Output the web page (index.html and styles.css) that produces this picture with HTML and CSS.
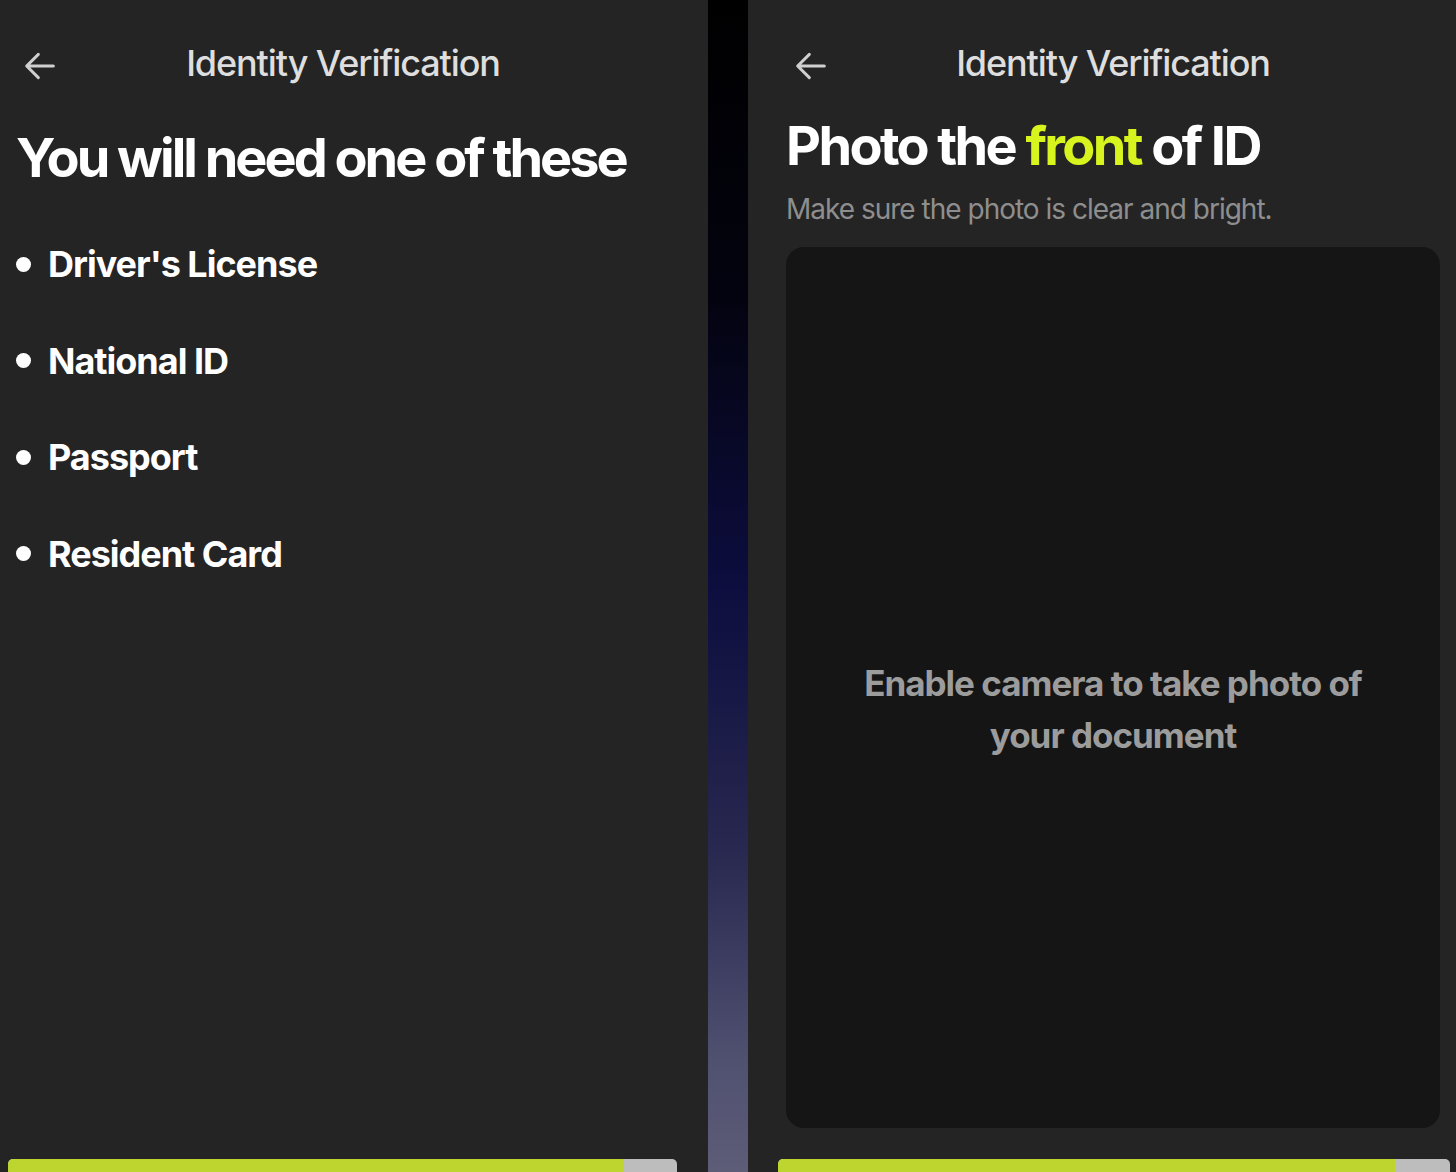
FILE: index.html
```html
<!DOCTYPE html>
<html lang="en">
<head>
<meta charset="UTF-8" />
<meta name="viewport" content="width=device-width, initial-scale=1" />
<title>Identity Verification</title>
<link rel="stylesheet" href="styles.css">
</head>
<body>

<div class="screen screen-left">
  <div class="topbar">
    <svg class="back" width="40" height="40" viewBox="0 0 24 24"><path d="M20 12H4.5M11 5l-7 7 7 7" fill="none" stroke="#cfcfcf" stroke-width="1.8" stroke-linecap="round" stroke-linejoin="round"/></svg>
    <div class="topbar-title">Identity Verification</div>
  </div>
  <h1 class="heading heading-needs">You will need one of these</h1>
  <ul class="doc-list">
    <li>Driver's License</li>
    <li>National ID</li>
    <li>Passport</li>
    <li>Resident Card</li>
  </ul>
  <div class="progress"><div class="progress-fill fill-left"></div></div>
</div>

<div class="divider"></div>

<div class="screen screen-right">
  <div class="topbar">
    <svg class="back" width="40" height="40" viewBox="0 0 24 24"><path d="M20 12H4.5M11 5l-7 7 7 7" fill="none" stroke="#cfcfcf" stroke-width="1.8" stroke-linecap="round" stroke-linejoin="round"/></svg>
    <div class="topbar-title">Identity Verification</div>
  </div>
  <h1 class="heading heading-photo">Photo the <span class="accent">front</span> of ID</h1>
  <p class="sub">Make sure the photo is clear and bright.</p>
  <div class="camera">
    <p>Enable camera to take photo of<br>your document</p>
  </div>
  <div class="progress"><div class="progress-fill fill-right"></div></div>
</div>

</body>
</html>
```

FILE: styles.css
```css
  body {
    margin: 0;
    height: 1172px;
    overflow: hidden;
    display: flex;
    background: #242424;
    font-family: Inter, "Noto Sans", sans-serif;
    color: #fff;
  }
  .screen {
    width: 708px;
    flex: none;
    display: flex;
    flex-direction: column;
    background: #242424;
    box-sizing: border-box;
  }
  .screen-left {
    padding: 0 38px 0 16px;
  }
  .screen-right {
    padding: 0 16px 0 38px;
  }
  .divider {
    width: 40px;
    flex: none;
    background: linear-gradient(#000 0%, #03030f 25%, #0d0d3f 50%, #27274f 72%, #4f4f70 90%, #5d5d78 100%);
  }
  .topbar {
    position: relative;
    height: 66px;
    margin-top: 30px;
    display: flex;
    align-items: center;
    justify-content: center;
  }
  .back {
    position: absolute;
    left: 4px;
    top: 16px;
  }
  .screen-right .back {
    left: 5px;
  }
  .topbar-title {
    font-size: 36px;
    font-weight: 500;
    color: #dedede;
    letter-spacing: -1.1px;
  }
  .heading {
    margin: 0;
    font-size: 54px;
    font-weight: 700;
    letter-spacing: -2.6px;
    line-height: 60px;
  }
  .heading-needs {
    margin-top: 32px;
    letter-spacing: -3px;
  }
  .heading-photo {
    margin-top: 20px;
  }
  .accent {
    color: #d8f41e;
  }
  .sub {
    margin: 11px 0 0;
    font-size: 28px;
    color: #8e8e8e;
    letter-spacing: -1px;
    line-height: 44px;
  }
  .doc-list {
    list-style: none;
    margin: 28px 0 0;
    padding: 0;
  }
  .doc-list li {
    display: flex;
    align-items: center;
    height: 96.5px;
    font-size: 36px;
    font-weight: 700;
    letter-spacing: -1px;
  }
  .doc-list li::before {
    content: "";
    width: 15px;
    height: 15px;
    border-radius: 50%;
    background: #fff;
    margin-right: 17px;
  }
  .camera {
    margin-top: 16px;
    height: 881px;
    background: #151515;
    border-radius: 18px;
    display: flex;
    align-items: center;
    justify-content: center;
  }
  .camera p {
    margin: 42px 0 0;
    text-align: center;
    font-size: 35px;
    font-weight: 700;
    color: #9c9c9c;
    letter-spacing: -1px;
    line-height: 52px;
  }
  .progress {
    margin-top: auto;
    height: 13px;
    background: #bdbdbd;
    border-radius: 5px 5px 0 0;
    display: flex;
  }
  .screen-left .progress {
    margin-left: -8px;
    margin-right: -7px;
  }
  .screen-right .progress {
    margin-left: -8px;
    margin-right: -10px;
  }
  .progress-fill {
    background: #bdd52e;
    border-radius: 5px 0 0 0;
  }
  .fill-left {
    width: 616px;
  }
  .fill-right {
    width: 617px;
  }
```
